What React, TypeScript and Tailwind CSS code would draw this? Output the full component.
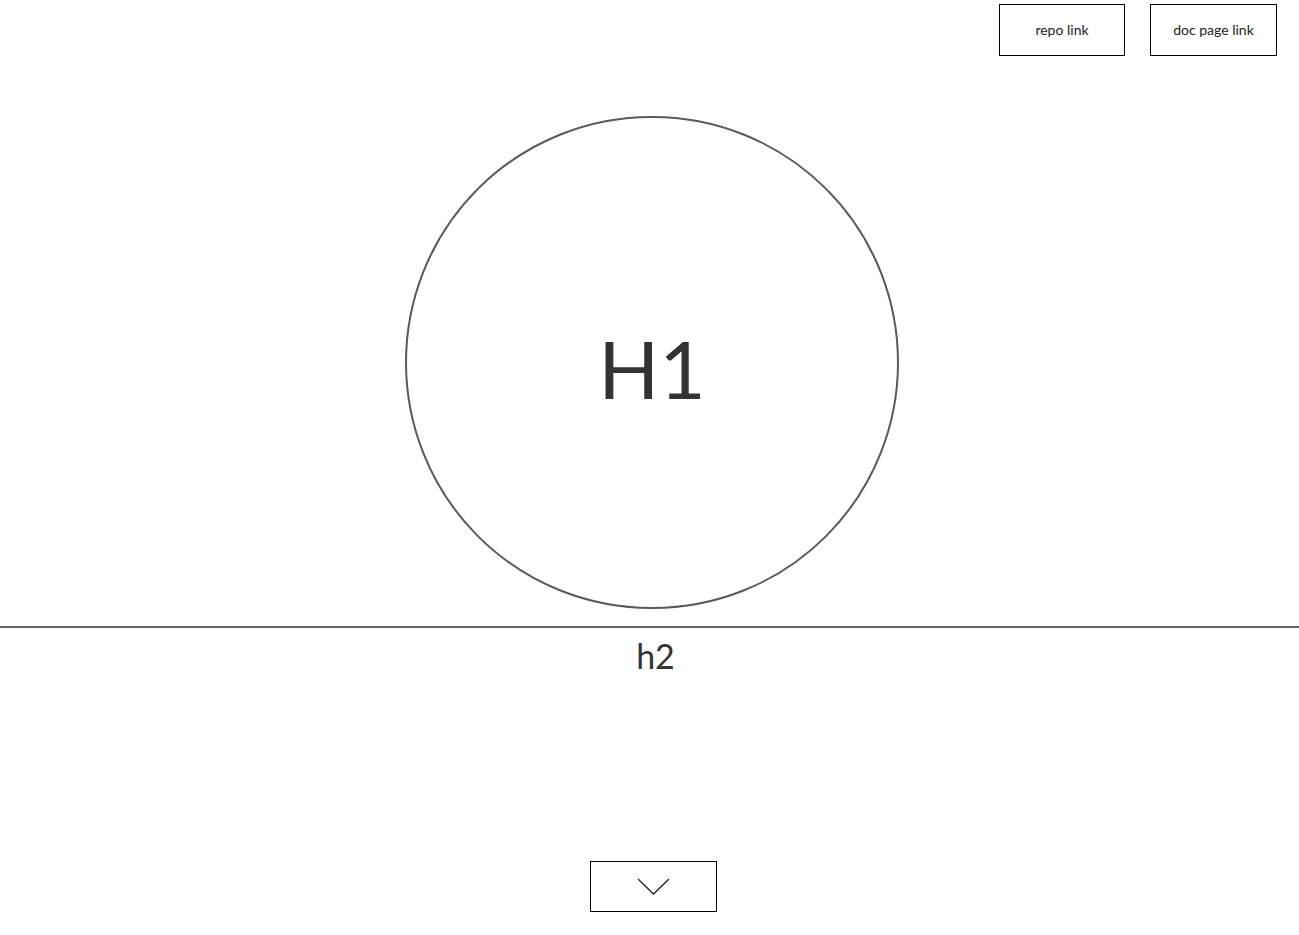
import React from "react";

export default function App() {
  return (
    <div className="w-[1299px] h-[935px] bg-white relative overflow-hidden" style={{ fontFamily: 'Lato, "Open Sans", sans-serif' }}>
      <div className="flex justify-end gap-[25px] pt-[4px] pr-[22px]">
        <button className="w-[126px] h-[52px] border border-black text-[14px] text-[#222] flex items-center justify-center pb-[2px]">repo link</button>
        <button className="w-[127px] h-[52px] border border-black text-[14px] text-[#222] flex items-center justify-center pb-[2px]">doc page link</button>
      </div>
      <div className="flex justify-center pl-[5px] mt-[60px]">
        <div className="w-[494px] h-[493px] rounded-full border-2 border-[#5a5a5a] flex items-center justify-center">
          <span className="text-[80px] leading-none text-[#333] mt-[10px]">H1</span>
        </div>
      </div>
      <div className="mt-[17px] h-[2px] bg-[#666]" />
      <div className="flex justify-center pl-[12px] mt-[6px]">
        <span className="text-[34px] leading-[44px] text-[#333]">h2</span>
      </div>
      <div className="flex justify-center pl-[7px] mt-[183px]">
        <button className="w-[127px] h-[51px] border border-black flex items-center justify-center">
          <svg width="33" height="17" viewBox="0 0 33 17" fill="none">
            <path d="M1 1 L16.5 16 L32 1" stroke="#222" strokeWidth="1.3" />
          </svg>
        </button>
      </div>
    </div>
  );
}
